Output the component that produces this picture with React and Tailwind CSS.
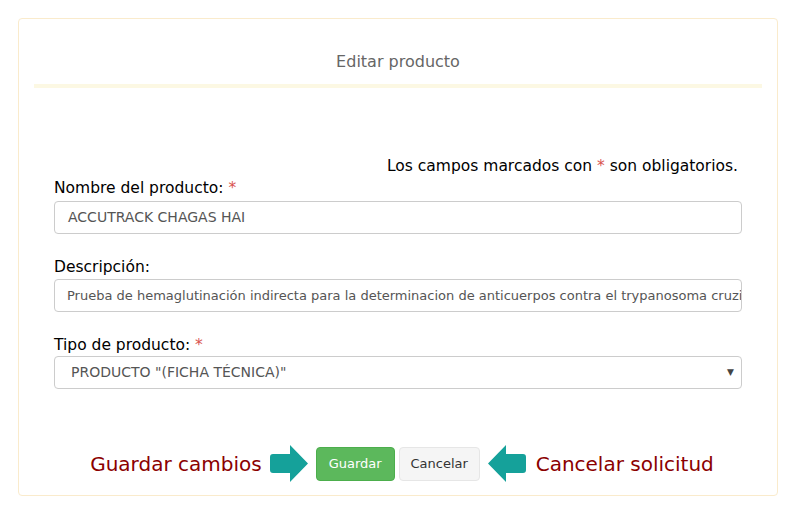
import React from "react";

const Star = () => <span className="text-[#d9534f]">*</span>;

const ArrowRight = () => (
  <svg width="38" height="37" viewBox="0 0 38 37" className="shrink-0">
    <path
      d="M3 9 H20 V0 L38 18.5 L20 37 V28 H3 Q0 28 0 25 V12 Q0 9 3 9 Z"
      fill="#15a19a"
    />
  </svg>
);

const ArrowLeft = () => (
  <svg width="38" height="37" viewBox="0 0 38 37" className="shrink-0">
    <path
      d="M35 9 H18 V0 L0 18.5 L18 37 V28 H35 Q38 28 38 25 V12 Q38 9 35 9 Z"
      fill="#15a19a"
    />
  </svg>
);

const App = () => {
  return (
    <div className="min-h-screen bg-white pt-[18px] pl-[18px] [font-family:'DejaVu_Sans',sans-serif]">
      <div className="w-[760px] h-[478px] border border-[#faebcc] rounded-[4px] px-[15px] flex flex-col">
        {/* Header */}
        <div className="pt-[32px] pb-[11px] text-center text-[16px] leading-[22px] text-[#666]">
          Editar producto
        </div>
        <div className="h-[4px] bg-[#fcf8e3]"></div>

        {/* Body */}
        <div className="px-[20px] pt-[67px]">
          <p className="text-right pr-[4px] text-[15.5px] leading-[22px] text-black">
            Los campos marcados con <Star /> son obligatorios.
          </p>

          <label className="block text-[15.5px] leading-[22px] text-black mb-[2px]">
            Nombre del producto: <Star />
          </label>
          <div className="h-[33px] border border-[#ccc] rounded-[4px] px-[13px] flex items-center text-[14px] text-[#555] overflow-hidden whitespace-nowrap">
            ACCUTRACK CHAGAS HAI
          </div>

          <label className="block mt-[22px] text-[15.5px] leading-[22px] text-black mb-[1px]">
            Descripción:
          </label>
          <div className="h-[33px] border border-[#ccc] rounded-[4px] pl-[12px] pr-[4px] flex items-center text-[13px] text-[#555] overflow-hidden whitespace-nowrap">
            Prueba de hemaglutinación indirecta para la determinacion de anticuerpos contra el trypanosoma cruzi
          </div>

          <label className="block mt-[22px] text-[15.5px] leading-[22px] text-black mb-[0px]">
            Tipo de producto: <Star />
          </label>
          <div className="h-[33px] border border-[#ccc] rounded-[4px] pl-[16px] pr-[7px] flex items-center justify-between text-[14px] text-[#555]">
            <span>PRODUCTO "(FICHA TÉCNICA)"</span>
            <span className="text-[9px] text-[#444]">▼</span>
          </div>

          {/* Actions */}
          <div className="mt-[56px] flex items-center justify-center pl-[8px]">
            <span className="text-[20px] text-[#8b0000] mr-[8px]">
              Guardar cambios
            </span>
            <ArrowRight />
            <button className="ml-[8px] h-[34px] w-[79px] bg-[#5cb85c] border border-[#4cae4c] rounded-[4px] text-white text-[13px]">
              Guardar
            </button>
            <button className="ml-[4px] h-[34px] w-[81px] bg-[#f5f5f5] border border-[#e6e6e6] rounded-[4px] text-[#333] text-[13px]">
              Cancelar
            </button>
            <span className="ml-[8px]">
              <ArrowLeft />
            </span>
            <span className="ml-[10px] text-[20px] text-[#8b0000]">
              Cancelar solicitud
            </span>
          </div>
        </div>
      </div>
    </div>
  );
};

export default App;
